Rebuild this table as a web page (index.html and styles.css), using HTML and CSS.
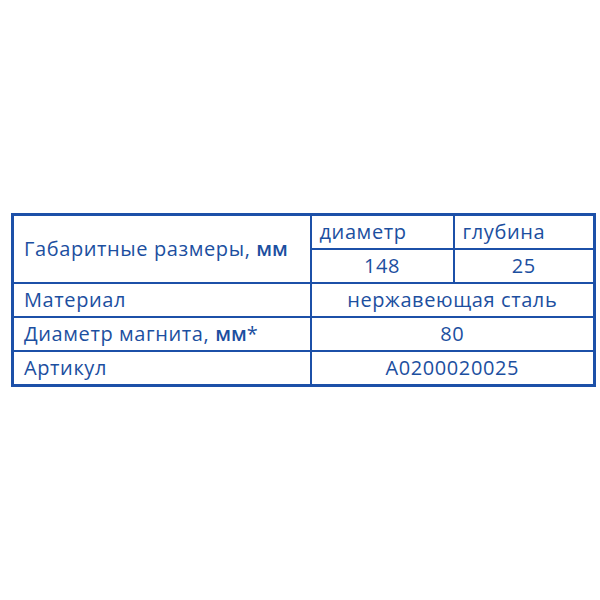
FILE: index.html
```html
<!DOCTYPE html>
<html lang="ru">
<head>
<meta charset="utf-8">
<link rel="stylesheet" href="styles.css">
</head>
<body>
<table class="spec">
  <colgroup>
    <col class="c-label">
    <col class="c-val">
    <col class="c-val2">
  </colgroup>
  <tr>
    <td class="label" rowspan="2">Габаритные размеры, <b>мм</b></td>
    <td class="head">диаметр</td>
    <td class="head">глубина</td>
  </tr>
  <tr>
    <td class="val">148</td>
    <td class="val">25</td>
  </tr>
  <tr>
    <td class="label">Материал</td>
    <td class="val" colspan="2">нержавеющая сталь</td>
  </tr>
  <tr>
    <td class="label">Диаметр магнита, <b>мм</b>*</td>
    <td class="val" colspan="2">80</td>
  </tr>
  <tr>
    <td class="label">Артикул</td>
    <td class="val" colspan="2">A0200020025</td>
  </tr>
</table>
</body>
</html>
```
FILE: styles.css
```css
html, body {
  margin: 0;
  padding: 0;
  background: #ffffff;
}
body {
  padding: 213px 0 0 11px;
}
.spec {
  border-collapse: collapse;
  table-layout: fixed;
  width: 582px;
  border: 3px solid #1c50a8;
  font-family: "Open Sans", "Noto Sans", sans-serif;
  font-size: 20px;
  letter-spacing: 0.6px;
  color: #1c4fa0;
}
.c-label { width: 298px; }
.c-val { width: 143px; }
.c-val2 { width: 141px; }
.spec td {
  border: 2px solid #1c50a8;
  padding: 0 8px;
  height: 32px;
  line-height: 24px;
  white-space: nowrap;
}
.spec td.label {
  padding-left: 10px;
  text-align: left;
}
.spec td.head {
  text-align: left;
}
.spec td.val {
  text-align: center;
}
.spec b {
  font-weight: 600;
  letter-spacing: 0;
}
```
